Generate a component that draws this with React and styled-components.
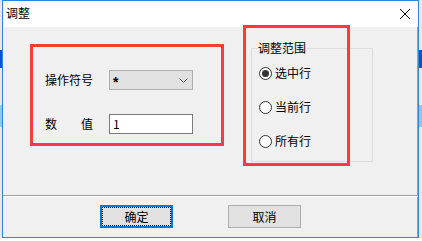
import React from "react";
import styled, { createGlobalStyle } from "styled-components";

const Global = createGlobalStyle`
  html, body { margin: 0; padding: 0; }
  body {
    width: 422px;
    height: 241px;
    overflow: hidden;
    font-family: "Noto Sans CJK SC", "Noto Sans", sans-serif;
    font-size: 12px;
    color: #000;
    background:
      linear-gradient(to bottom,
        #e8e8e8 0, #e8e8e8 50px,
        #0a52d4 50px, #0a52d4 68px,
        #e8e8e8 68px, #e8e8e8 105px,
        #8cc8f2 105px, #8cc8f2 127px,
        #e8e8e8 127px, #e8e8e8 238px,
        #ffffff 238px);
  }
`;

const Window = styled.div`
  position: relative;
  box-sizing: border-box;
  margin-left: 2px;
  width: 417px;
  height: 238px;
  border: 1px solid #2b88d8;
  display: flex;
  flex-direction: column;
  background: #f0f0f0;
`;

const TitleBar = styled.div`
  height: 26px;
  background: #fff;
  display: flex;
  align-items: flex-start;
  justify-content: space-between;
  padding: 4px 0 0 3px;
  box-sizing: border-box;
`;

const Title = styled.span`
  line-height: 16px;
  font-size: 12px;
`;

const CloseBtn = styled.div`
  width: 10px;
  height: 10px;
  margin: 4px 8px 0 0;
  display: flex;
`;

const Body = styled.div`
  flex: 1;
  display: flex;
  flex-direction: column;
  box-shadow: inset -1px 0 0 #a0a0a0;
`;

const Main = styled.div`
  height: 168px;
  display: flex;
  align-items: flex-start;
`;

const Form = styled.div`
  padding: 43px 0 0 42px;
  display: flex;
  flex-direction: column;
  gap: 24px;
`;

const Row = styled.div`
  display: flex;
  align-items: center;
  height: 20px;
`;

const Label = styled.span`
  width: 48px;
  margin-right: 16px;
  display: flex;
  justify-content: space-between;
  line-height: 16px;
`;

const Select = styled.div`
  box-sizing: border-box;
  width: 84px;
  height: 20px;
  background: #e1e1e1;
  border: 1px solid #adadad;
  display: flex;
  align-items: center;
  justify-content: space-between;
  padding: 0 4px 0 3px;
  line-height: 16px;
`;

const Star = styled.span`
  font-family: "Liberation Sans", Arial, sans-serif;
  font-size: 14px;
  font-weight: bold;
  line-height: 14px;
  padding-top: 3px;
`;

const Input = styled.div`
  box-sizing: border-box;
  width: 84px;
  height: 20px;
  background: #fff;
  border: 1px solid #7a7a7a;
  display: flex;
  align-items: center;
  padding-left: 3px;
  line-height: 16px;
`;

const Group = styled.fieldset`
  box-sizing: border-box;
  margin: 13px 0 0 58px;
  width: 122px;
  height: 122px;
  padding: 0 6px;
  border: 1px solid #dcdcdc;
`;

const Legend = styled.legend`
  padding: 0 1px 0 0;
  line-height: 16px;
  font-size: 12px;
`;

const RadioList = styled.div`
  margin-top: 9px;
  display: flex;
  flex-direction: column;
  gap: 18px;
`;

const RadioRow = styled.label`
  display: flex;
  align-items: center;
  height: 16px;
  line-height: 16px;
  padding-left: 1px;
`;

const Circle = styled.span`
  box-sizing: border-box;
  width: 13px;
  height: 13px;
  border-radius: 50%;
  border: 1px solid #333;
  background: #fff;
  margin-right: 3px;
  display: flex;
  align-items: center;
  justify-content: center;
  &::after {
    content: "";
    width: 7px;
    height: 7px;
    border-radius: 50%;
    background: ${(p) => (p.$checked ? "#333" : "transparent")};
  }
`;

const Separator = styled.div`
  height: 1px;
  background: #a0a0a0;
  border-bottom: 1px solid #fff;
`;

const Footer = styled.div`
  display: flex;
  padding: 8px 0 0 97px;
  gap: 55px;
`;

const Button = styled.button`
  box-sizing: border-box;
  width: 73px;
  height: 23px;
  padding: 0;
  margin: 0;
  background: #e1e1e1;
  border: ${(p) => (p.$default ? "2px solid #0078d7" : "1px solid #adadad")};
  font-family: inherit;
  font-size: 12px;
  color: #000;
  display: flex;
  align-items: center;
  justify-content: center;
`;

const Focus = styled.span`
  box-sizing: border-box;
  width: 100%;
  height: 100%;
  border: 1px dotted #000;
  display: flex;
  align-items: center;
  justify-content: center;
`;

const Mark = styled.div`
  position: absolute;
  box-sizing: border-box;
  border: 3px solid #ff3a3a;
  pointer-events: none;
`;

const Chevron = () => (
  <svg width="9" height="5" viewBox="0 0 9 5">
    <path d="M0.5 0.5 L4.5 4.5 L8.5 0.5" fill="none" stroke="#606060" strokeWidth="1" />
  </svg>
);

export default function App() {
  return (
    <>
      <Global />
      <Window>
        <TitleBar>
          <Title>调整</Title>
          <CloseBtn>
            <svg width="10" height="10" viewBox="0 0 10 10">
              <path d="M0 0 L10 10 M10 0 L0 10" stroke="#000" strokeWidth="1" />
            </svg>
          </CloseBtn>
        </TitleBar>
        <Body>
          <Main>
            <Form>
              <Row>
                <Label>操作符号</Label>
                <Select>
                  <Star>*</Star>
                  <Chevron />
                </Select>
              </Row>
              <Row>
                <Label>
                  <span>数</span>
                  <span>值</span>
                </Label>
                <Input>1</Input>
              </Row>
            </Form>
            <Group>
              <Legend>调整范围</Legend>
              <RadioList>
                <RadioRow>
                  <Circle $checked />
                  选中行
                </RadioRow>
                <RadioRow>
                  <Circle />
                  当前行
                </RadioRow>
                <RadioRow>
                  <Circle />
                  所有行
                </RadioRow>
              </RadioList>
            </Group>
          </Main>
          <Separator />
          <Footer>
            <Button $default>
              <Focus>确定</Focus>
            </Button>
            <Button>取消</Button>
          </Footer>
        </Body>
        <Mark style={{ left: 27, top: 43, width: 194, height: 102 }} />
        <Mark style={{ left: 240, top: 24, width: 107, height: 141 }} />
      </Window>
    </>
  );
}
